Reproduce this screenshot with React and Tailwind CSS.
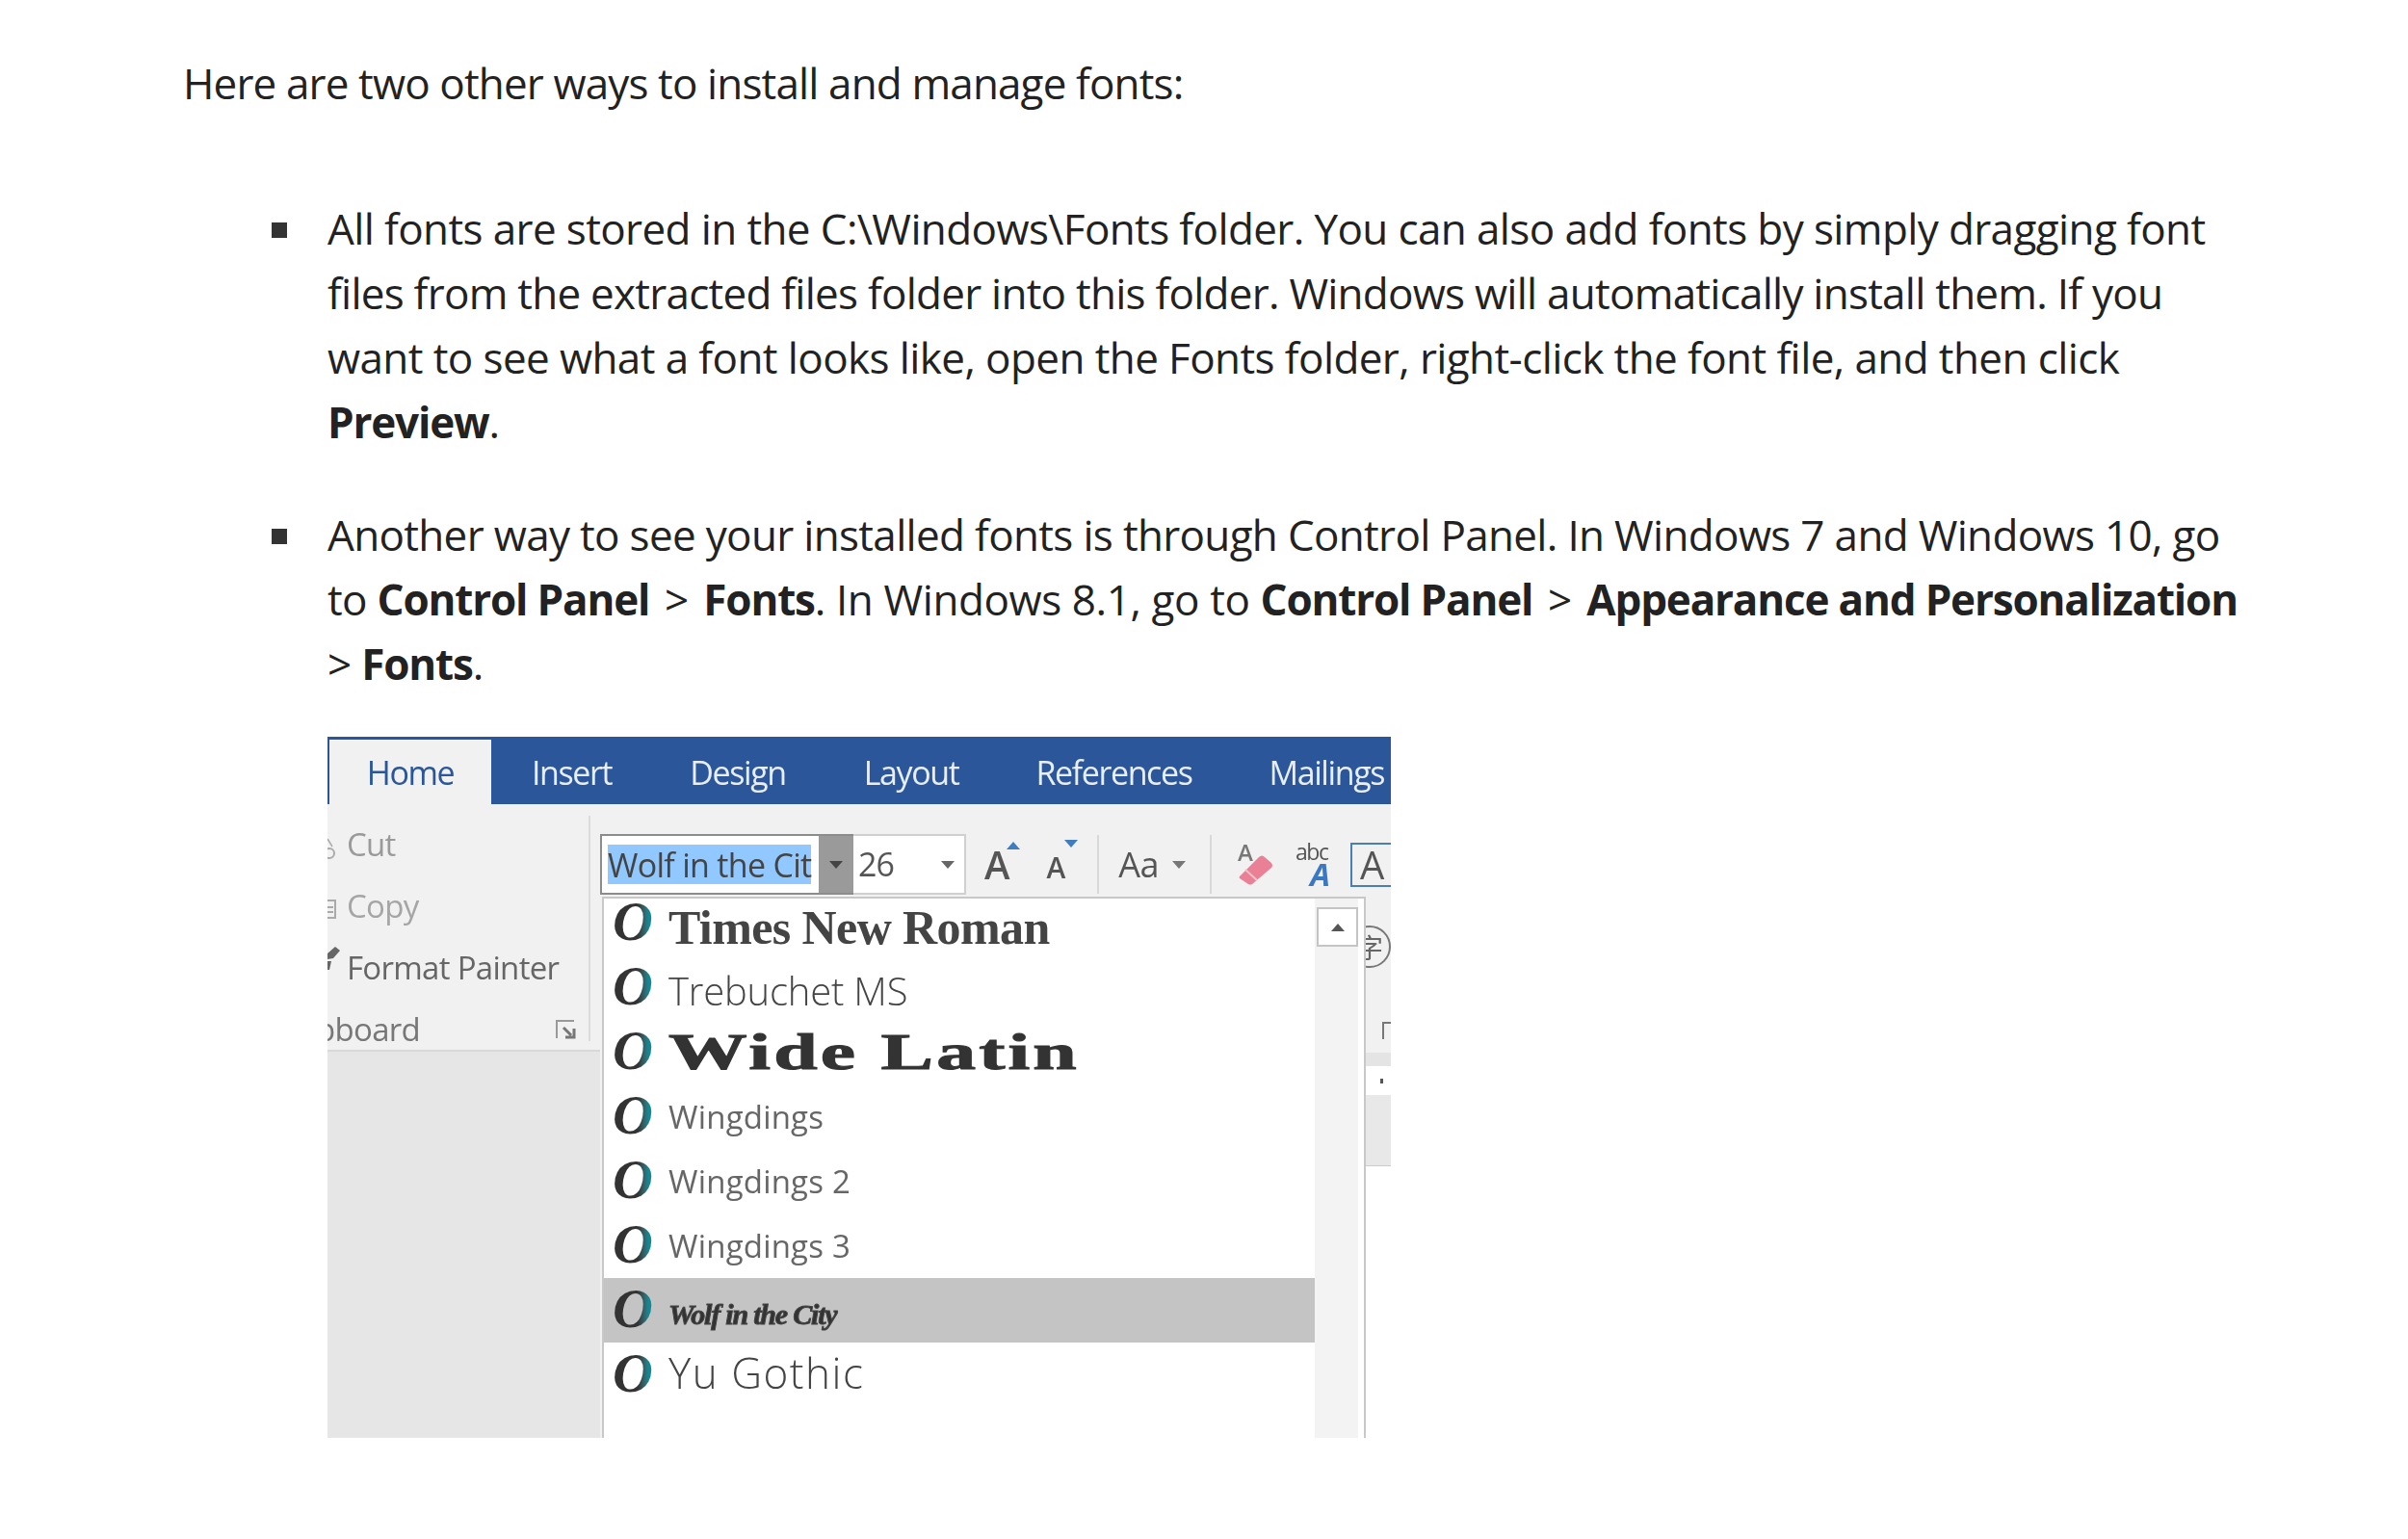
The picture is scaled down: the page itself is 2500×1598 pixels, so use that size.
import React from 'react';

const bodyFont = "font-['Open_Sans','Noto_Sans',sans-serif]";

const B = ({ children }) => <strong className="font-bold tracking-[-1.17px] text-[#222]">{children}</strong>;

const Gt = () => <span className="mx-[5px]">&gt;</span>;

const FontRow = ({ label, labelClass, selected }) => (
  <div className={`flex h-[67px] items-center pl-[9px] ${selected ? 'bg-[#c4c4c4]' : ''}`}>
    <span className="-mt-[4px] w-[58px] shrink-0 bg-gradient-to-r from-[#333] from-45% to-[#0b8a96] to-65% bg-clip-text pr-[6px] font-['Liberation_Serif',serif] text-[58px] leading-none font-bold italic text-transparent">
      O
    </span>
    <span className={labelClass}>{label}</span>
  </div>
);

const Caret = ({ className = '' }) => (
  <svg width="14" height="8" viewBox="0 0 14 8" className={`shrink-0 ${className}`}>
    <path d="M0 0h14L7 8z" fill="currentColor" />
  </svg>
);

const Toolbar = () => (
  <div className="flex h-[96px] items-start pt-[31px] font-['Open_Sans',sans-serif]">
    <div className="flex h-[63px] w-[263px] shrink-0 border-2 border-r-0 border-[#8c8c8c] bg-white">
      <div className="flex flex-1 items-center pl-[6px]">
        <span className="flex h-[41px] items-center bg-[#90c8ff] text-[34px] leading-none tracking-[-0.7px] whitespace-nowrap text-[#444]">
          Wolf in the Cit
        </span>
      </div>
      <div className="flex w-[36px] items-center justify-center bg-[#9a9a9a] text-[#444]">
        <Caret />
      </div>
    </div>
    <div className="flex h-[63px] w-[117px] shrink-0 items-center justify-between border-2 border-l-0 border-[#d0d0d0] bg-white pr-[10px] pl-[5px] text-[34px] tracking-[-1px] text-[#555]">
      <span>26</span>
      <Caret className="text-[#666]" />
    </div>
    <div className="flex h-[63px] shrink-0 items-center text-[#555]">
      <span className="relative ml-[19px] text-[40px] leading-none font-semibold">
        A
        <svg width="14" height="8" viewBox="0 0 14 8" className="absolute top-[-4px] right-[-11px]">
          <path d="M7 0l7 8H0z" fill="#3f7cc0" />
        </svg>
      </span>
      <span className="relative mt-[6px] ml-[38px] text-[30px] leading-none font-semibold">
        A
        <svg width="14" height="8" viewBox="0 0 14 8" className="absolute top-[-14px] right-[-13px]">
          <path d="M0 0h14L7 8z" fill="#3f7cc0" />
        </svg>
      </span>
      <span className="ml-[33px] h-[61px] w-[2px] bg-[#d8d8d8]" />
      <span className="ml-[20px] text-[36px] leading-none tracking-[-0.5px]">Aa</span>
      <Caret className="ml-[14px] text-[#777]" />
      <span className="ml-[25px] h-[61px] w-[2px] bg-[#d8d8d8]" />
      <span className="relative ml-[27px] h-[42px] w-[37px] shrink-0">
        <span className="absolute top-[-4px] left-0 text-[24px] leading-none font-semibold text-[#777]">A</span>
        <svg width="37" height="34" viewBox="0 0 37 34" className="absolute bottom-0 left-0">
          <path d="M2 25L22 5q3-3 6 0l7 6q2 3 0 5L15 33q-2 1-4 0l-9-6q-1-1 0-2z" fill="#ea8095" />
          <path d="M8 18l12 11" stroke="#f4c0ca" strokeWidth="2" />
        </svg>
      </span>
      <span className="relative ml-[23px] h-[46px] w-[35px] shrink-0">
        <span className="absolute top-[-2px] left-0 text-[23px] leading-none tracking-[-1.5px] text-[#555]">abc</span>
        <span className="absolute right-[-1px] bottom-[-3px] text-[33px] leading-none font-bold text-[#3a78c4] italic">A</span>
      </span>
      <span className="ml-[22px] flex h-[46px] w-[60px] shrink-0 items-center border-2 border-r-0 border-[#4a7fb5] pl-[8px] text-[40px] leading-none font-medium text-[#555]">
        A
      </span>
    </div>
  </div>
);

const Clipboard = () => (
  <div className="flex h-[257px] border-b-2 border-[#d8d8d8] bg-[#f1f1f1] font-['Open_Sans',sans-serif] text-[33px] tracking-[-0.7px]">
    <div className="relative w-[271px] shrink-0 pt-[9px]">
      <div className="flex h-[64px] items-center pl-[20px] text-[#9a9a9a]">Cut</div>
      <div className="flex h-[64px] items-center pl-[20px] text-[#a5a5a5]">Copy</div>
      <div className="flex h-[64px] items-center pl-[20px] text-[#666]">Format Painter</div>
      <div className="flex h-[64px] items-center text-[#777]">
        <span className="ml-[-12px]">pboard</span>
      </div>
      <svg width="22" height="22" viewBox="0 0 22 22" className="absolute right-[13px] bottom-[10px]">
        <path d="M2 20V2h18" fill="none" stroke="#999" strokeWidth="2" />
        <path d="M9 9l8 8M11 19h9v-9" fill="none" stroke="#777" strokeWidth="3" />
      </svg>
      <svg width="9" height="24" viewBox="0 0 9 24" className="absolute top-[34px] left-0">
        <path d="M0 2l5 8" stroke="#aaa" strokeWidth="1.5" />
        <circle cx="2" cy="17" r="5" fill="none" stroke="#aaa" strokeWidth="2" />
      </svg>
      <svg width="9" height="24" viewBox="0 0 9 24" className="absolute top-[96px] left-0">
        <path d="M0 4h8v18H0M0 11h6M0 16h6" fill="none" stroke="#aaa" strokeWidth="2" />
      </svg>
      <svg width="14" height="26" viewBox="0 0 14 26" className="absolute top-[147px] left-0">
        <path d="M0 8l8-7 5 4-7 8-6 1zM0 16l4 0-2 9-2 0z" fill="#666" />
      </svg>
    </div>
    <span className="mt-[12px] h-[234px] w-[2px] bg-[#dcdcdc]" />
  </div>
);

const RightStub = () => (
  <div className="min-w-0 flex-1 overflow-hidden bg-white">
    <div className="flex h-[162px] flex-col bg-[#f1f1f1]">
      <span className="mt-[30px] -ml-[18px] flex h-[44px] w-[44px] shrink-0 items-center justify-center rounded-full border-2 border-[#777] font-['Noto_Sans_CJK_SC',sans-serif] text-[28px] leading-none text-[#666]">
        字
      </span>
      <span className="mt-[56px] ml-[17px] h-[18px] w-[9px] border-t-2 border-l-2 border-[#777]" />
    </div>
    <div className="h-[14px] bg-[#e4e4e4]" />
    <div className="flex h-[30px] items-center bg-white pl-[15px]">
      <span className="h-[5px] w-[3px] bg-[#555]" />
    </div>
    <div className="h-[74px] border-b border-[#ccc] bg-[#e8e8e8]" />
  </div>
);

const App = () => {
  return (
    <div className={`min-h-[1598px] bg-white pt-[53px] pl-[190px] text-[44px] leading-[67px] text-[#222] ${bodyFont}`}>
      <p className="tracking-[-0.86px]">Here are two other ways to install and manage fonts:</p>

      <ul className="mt-[84px] w-[2200px] tracking-[-0.67px]">
        <li className="flex">
          <span className="mt-[27px] ml-[92px] h-[16px] w-[16px] shrink-0 bg-[#333]" />
          <p className="ml-[42px] w-[2060px]">
            <span className="tracking-[-0.61px]">All fonts are stored in the C:\Windows\Fonts folder. You can also add fonts by simply dragging font</span>
            <br />
            <span className="tracking-[-0.75px]">files from the extracted files folder into this folder. Windows will automatically install them. If you</span>
            <br />
            <span className="tracking-[-0.59px]">want to see what a font looks like, open the Fonts folder, right-click the font file, and then click</span>
            <br />
            <B>Preview</B>.
          </p>
        </li>
        <li className="mt-[50px] flex">
          <span className="mt-[27px] ml-[92px] h-[16px] w-[16px] shrink-0 bg-[#333]" />
          <div className="ml-[42px] w-[2060px]">
            <p>
              Another way to see your installed fonts is through Control Panel. In Windows 7 and Windows 10, go
              <br />
              to <B>Control Panel</B> <Gt /> <B>Fonts</B>
              <span className="tracking-[-0.4px]">. In Windows 8.1, go to </span>
              <B>Control Panel</B> <Gt /> <B>Appearance and Personalization</B>
              <br />
              &gt; <B>Fonts</B>.
            </p>

            <div className="mt-[42px] flex h-[728px] w-[1104px] flex-col overflow-hidden tracking-normal blur-[0.6px]">
              <div className="flex h-[70px] shrink-0 items-end bg-[#2b579a] pl-[2px] font-['Open_Sans',sans-serif] text-[34px] leading-none tracking-[-1.4px] text-[#e8eef8]">
                <div className="flex h-[67px] w-[168px] shrink-0 items-center justify-center bg-[#f1f1f1] text-[#2b579a]">Home</div>
                <div className="flex h-[67px] items-center whitespace-nowrap">
                  <span className="ml-[42px]">Insert</span>
                  <span className="ml-[81px]">Design</span>
                  <span className="ml-[81px]">Layout</span>
                  <span className="ml-[80px]">References</span>
                  <span className="ml-[80px]">Mailings</span>
                </div>
              </div>

              <div className="flex min-h-0 flex-1">
                <div className="flex w-[283px] shrink-0 flex-col bg-[#e6e6e6]">
                  <Clipboard />
                </div>
                <div className="flex min-w-0 flex-1 flex-col bg-[#f1f1f1]">
                  <Toolbar />
                  <div className="flex min-h-0 flex-1">
                    <div className="ml-[2px] flex w-[793px] shrink-0 overflow-hidden border-t-2 border-r-2 border-l-2 border-[#c8c8c8] bg-white">
                      <div className="-mt-[8px] w-[738px] shrink-0">
                        <FontRow label="Times New Roman" labelClass="font-['Liberation_Serif',serif] text-[50px] leading-none font-bold tracking-[-0.6px] text-[#444] mt-[8px]" />
                        <FontRow label="Trebuchet MS" labelClass="font-['Open_Sans',sans-serif] text-[40px] leading-none font-light tracking-[-0.2px] text-[#444] mt-[6px]" />
                        <FontRow label="Wide Latin" labelClass="font-['Liberation_Serif',serif] text-[52px] leading-none font-bold tracking-[2px] text-[#333] [transform:scaleX(1.57)] origin-left [-webkit-text-stroke:1px_#333]" />
                        <FontRow label="Wingdings" labelClass="font-['Open_Sans',sans-serif] text-[33px] leading-none tracking-[0.2px] text-[#666]" />
                        <FontRow label="Wingdings 2" labelClass="font-['Open_Sans',sans-serif] text-[33px] leading-none tracking-[0.2px] text-[#666]" />
                        <FontRow label="Wingdings 3" labelClass="font-['Open_Sans',sans-serif] text-[33px] leading-none tracking-[0.2px] text-[#666]" />
                        <FontRow selected label="Wolf in the City" labelClass="font-['Liberation_Serif',serif] text-[30px] leading-none italic font-bold tracking-[-1.2px] text-[#333] mt-[8px] [-webkit-text-stroke:1px_#444]" />
                        <FontRow label="Yu Gothic" labelClass="font-['Open_Sans',sans-serif] text-[44px] leading-none font-light tracking-[1.5px] text-[#444] -mt-[6px]" />
                      </div>
                      <div className="w-[45px] shrink-0 bg-[#f3f3f3] pl-[2px]">
                        <div className="mt-[9px] flex h-[41px] w-[43px] items-center justify-center border-2 border-[#c4c4c4] bg-white">
                          <Caret className="rotate-180 text-[#555]" />
                        </div>
                      </div>
                    </div>
                    <RightStub />
                  </div>
                </div>
              </div>
            </div>
          </div>
        </li>
      </ul>
    </div>
  );
};

export default App;
